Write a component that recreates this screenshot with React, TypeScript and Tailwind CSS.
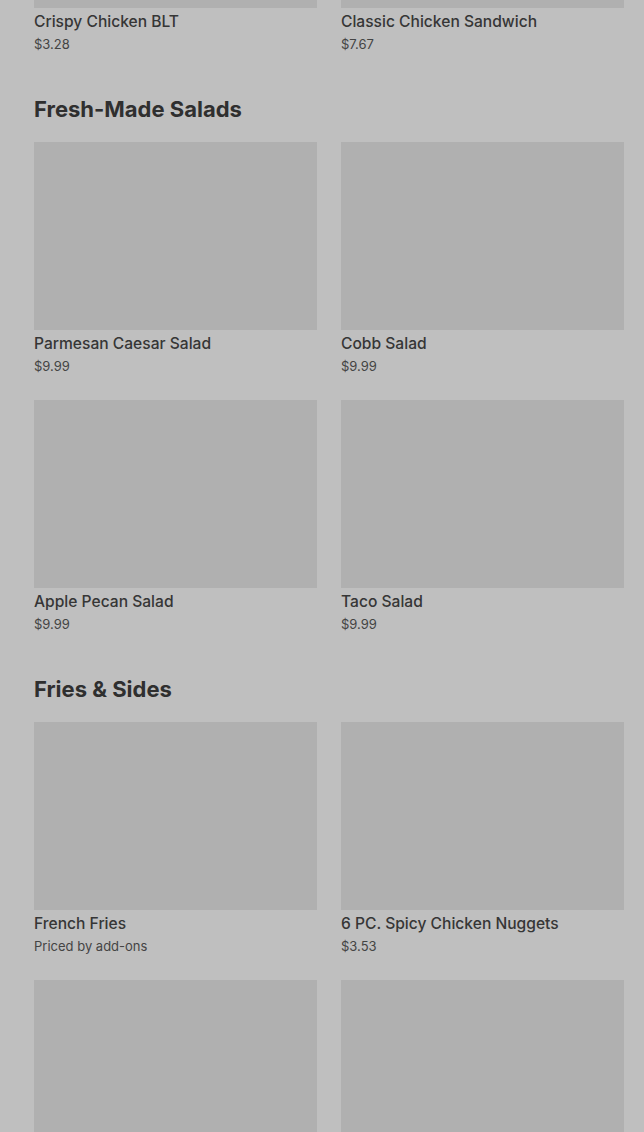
import React from "react";

type Item = { name: string; price: string };

const Card = ({ item }: { item: Item }) => (
  <div className="flex flex-col">
    <div className="h-[188px] w-full bg-[#b0b0b0]" />
    {item.name ? (
      <div className="pt-[3px]">
        <div className="text-[15.6px] leading-[22px] font-medium text-[#363636] truncate">{item.name}</div>
        <div className="mt-[1px] text-[13px] leading-[20px] text-[#444444]">{item.price}</div>
      </div>
    ) : null}
  </div>
);

const Grid = ({ items, className = "" }: { items: Item[]; className?: string }) => (
  <div className={`grid grid-cols-2 gap-x-6 gap-y-6 ${className}`}>
    {items.map((it, i) => (
      <Card key={i} item={it} />
    ))}
  </div>
);

const Section = ({ title, items }: { title: string; items: Item[] }) => (
  <div>
    <h2 className="mt-[41px] mb-[19px] text-[22px] leading-[28px] font-bold text-[#2f2f2f]">{title}</h2>
    <Grid items={items} />
  </div>
);

export default function App() {
  return (
    <div
      className="h-[1132px] w-[644px] overflow-hidden bg-[#bfbfbf] pl-[34px] pr-[20px]"
      style={{ fontFamily: "Inter, 'Noto Sans', sans-serif" }}
    >
      <Grid
        className="mt-[-180px]"
        items={[
          { name: "Crispy Chicken BLT", price: "$3.28" },
          { name: "Classic Chicken Sandwich", price: "$7.67" },
        ]}
      />
      <Section
        title="Fresh-Made Salads"
        items={[
          { name: "Parmesan Caesar Salad", price: "$9.99" },
          { name: "Cobb Salad", price: "$9.99" },
          { name: "Apple Pecan Salad", price: "$9.99" },
          { name: "Taco Salad", price: "$9.99" },
        ]}
      />
      <Section
        title="Fries & Sides"
        items={[
          { name: "French Fries", price: "Priced by add-ons" },
          { name: "6 PC. Spicy Chicken Nuggets", price: "$3.53" },
          { name: "", price: "" },
          { name: "", price: "" },
        ]}
      />
    </div>
  );
}
